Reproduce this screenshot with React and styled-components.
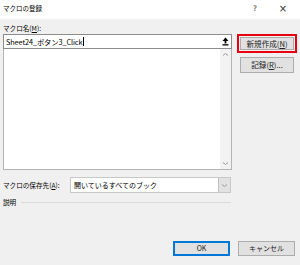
import React from "react";
import styled, { createGlobalStyle } from "styled-components";

const GlobalStyle = createGlobalStyle`
  html, body {
    margin: 0;
    padding: 0;
  }
  body {
    background: #f0f0f0;
    font-family: "Noto Sans CJK JP", "Noto Sans", sans-serif;
    color: #000;
  }
`;

const Chevron = ({ down }) => (
  <svg width="7" height="5" viewBox="0 0 7 5">
    <polyline
      points={down ? "1,1.5 3.5,3.5 6,1.5" : "1,3.5 3.5,1.5 6,3.5"}
      fill="none"
      stroke="#9a9a9a"
      strokeWidth="1"
    />
  </svg>
);

const CollapseIcon = () => (
  <svg width="7" height="9" viewBox="0 0 7 9">
    <polygon points="3.5,0.5 6.5,4 0.5,4" fill="#000" />
    <rect x="2.6" y="3.5" width="1.8" height="3" fill="#000" />
    <rect x="0.5" y="7.2" width="6" height="1.3" fill="#000" />
  </svg>
);

const App = () => {
  return (
    <Dialog>
      <GlobalStyle />
      <TitleBar>
        <Title>マクロの登録</Title>
        <TitleButton>?</TitleButton>
        <TitleButton $large>×</TitleButton>
      </TitleBar>

      <Main>
        <LeftCol>
          <FieldLabel>
            マクロ名(<u>M</u>):
          </FieldLabel>
          <NameInput>
            <NameText>Sheet24_ボタン3_Click</NameText>
            <Caret />
            <CollapseButton>
              <CollapseIcon />
            </CollapseButton>
          </NameInput>
          <ListBox>
            <ListItems />
            <ScrollBar>
              <Chevron />
              <Chevron down />
            </ScrollBar>
          </ListBox>
        </LeftCol>

        <RightCol>
          <Highlight>
            <Button $fill>
              新規作成(<u>N</u>)
            </Button>
          </Highlight>
          <SideButton>
            記録(<u>R</u>)...
          </SideButton>
        </RightCol>
      </Main>

      <SaveRow>
        <SaveLabel>
          マクロの保存先(<u>A</u>):
        </SaveLabel>
        <Select>
          <SelectText>開いているすべてのブック</SelectText>
          <DropButton>
            <Chevron down />
          </DropButton>
        </Select>
      </SaveRow>

      <GroupRow>
        <span>説明</span>
        <GroupLine />
      </GroupRow>

      <Footer>
        <FooterButton $default>OK</FooterButton>
        <FooterButton>キャンセル</FooterButton>
      </Footer>
    </Dialog>
  );
};

// styled components
const Dialog = styled.div`
  width: 300px;
  height: 265px;
  display: flex;
  flex-direction: column;
  background: #f0f0f0;
  overflow: hidden;
`;

const TitleBar = styled.div`
  height: 19px;
  flex-shrink: 0;
  background: #ffffff;
  display: flex;
  align-items: center;
  padding: 0 3px 0 3px;
  font-size: 6.5px;
`;

const Title = styled.span`
  flex: 1;
  margin-top: -3px;
`;

const TitleButton = styled.span`
  width: 28px;
  text-align: center;
  font-family: "DejaVu Sans", sans-serif;
  font-size: ${props => (props.$large ? "10px" : "7.5px")};
  color: #333;
  margin-top: -3px;
`;

const Main = styled.div`
  display: flex;
  gap: 5px;
  padding: 0 3px;
`;

const LeftCol = styled.div`
  width: 229px;
  display: flex;
  flex-direction: column;
`;

const FieldLabel = styled.div`
  height: 15px;
  box-sizing: border-box;
  display: flex;
  align-items: flex-end;
  padding-bottom: 2px;
  font-size: 6.6px;
  line-height: 1;

  u {
    text-underline-offset: 1px;
  }
`;

const NameInput = styled.div`
  height: 15px;
  box-sizing: border-box;
  background: #ffffff;
  border: 1px solid #8c8c8c;
  display: flex;
  align-items: center;
  padding-left: 2px;
`;

const NameText = styled.span`
  font-size: 7.3px;
  letter-spacing: -0.1px;
`;

const Caret = styled.span`
  width: 1px;
  height: 9px;
  background: #000;
  margin-left: 0.5px;
`;

const CollapseButton = styled.div`
  margin-left: auto;
  width: 12px;
  height: 100%;
  display: flex;
  align-items: center;
  justify-content: center;
`;

const ListBox = styled.div`
  height: 121px;
  box-sizing: border-box;
  background: #ffffff;
  border: 1px solid #b4b4b4;
  border-top: none;
  display: flex;
`;

const ListItems = styled.div`
  flex: 1;
`;

const ScrollBar = styled.div`
  width: 11px;
  background: #f2f2f2;
  display: flex;
  flex-direction: column;
  align-items: center;
  justify-content: space-between;
  padding: 3px 0 3px;
`;

const RightCol = styled.div`
  width: 60px;
  display: flex;
  flex-direction: column;
  padding-top: 15px;
`;

const Highlight = styled.div`
  height: 19px;
  box-sizing: border-box;
  border: 2px solid #e60012;
  padding: 1px;
  display: flex;
`;

const Button = styled.div`
  flex: ${props => (props.$fill ? 1 : "none")};
  box-sizing: border-box;
  background: #e1e1e1;
  border: 1px solid #adadad;
  display: flex;
  align-items: center;
  justify-content: center;
  font-size: 7.6px;
  line-height: 1;
  color: #222;

  u {
    text-underline-offset: 1px;
  }
`;

const SideButton = styled(Button)`
  width: 54px;
  height: 16px;
  margin: 4px 0 0 3px;
`;

const SaveRow = styled.div`
  display: flex;
  align-items: center;
  padding: 0 3px;
  margin-top: 7px;
`;

const SaveLabel = styled.span`
  width: 67px;
  font-size: 6.6px;
  line-height: 1;
  white-space: nowrap;

  u {
    text-underline-offset: 1px;
  }
`;

const Select = styled.div`
  width: 161px;
  height: 16px;
  box-sizing: border-box;
  background: #ffffff;
  border: 1px solid #c8c8c8;
  display: flex;
  align-items: center;
`;

const SelectText = styled.span`
  flex: 1;
  padding-left: 3px;
  font-size: 7px;
`;

const DropButton = styled.div`
  width: 12px;
  height: 100%;
  box-sizing: border-box;
  background: #e2e2e2;
  border-left: 1px solid #c0c0c0;
  display: flex;
  align-items: center;
  justify-content: center;
`;

const GroupRow = styled.div`
  display: flex;
  align-items: center;
  padding: 0 69px 0 3px;
  margin-top: 6px;
  font-size: 6.6px;
  line-height: 1;
`;

const GroupLine = styled.div`
  flex: 1;
  height: 1px;
  background: #dadada;
  margin-left: 5px;
`;

const Footer = styled.div`
  margin-top: auto;
  display: flex;
  justify-content: flex-end;
  gap: 8px;
  padding: 0 5px 9px 0;
`;

const FooterButton = styled.div`
  width: 57px;
  height: 15px;
  box-sizing: border-box;
  background: #e1e1e1;
  border: 1px solid ${props => (props.$default ? "#0078d7" : "#adadad")};
  box-shadow: ${props => (props.$default ? "inset 0 0 0 1px #0078d7" : "none")};
  display: flex;
  align-items: center;
  justify-content: center;
  font-size: 7px;
  line-height: 1;
  color: #222;
`;

export default App;
